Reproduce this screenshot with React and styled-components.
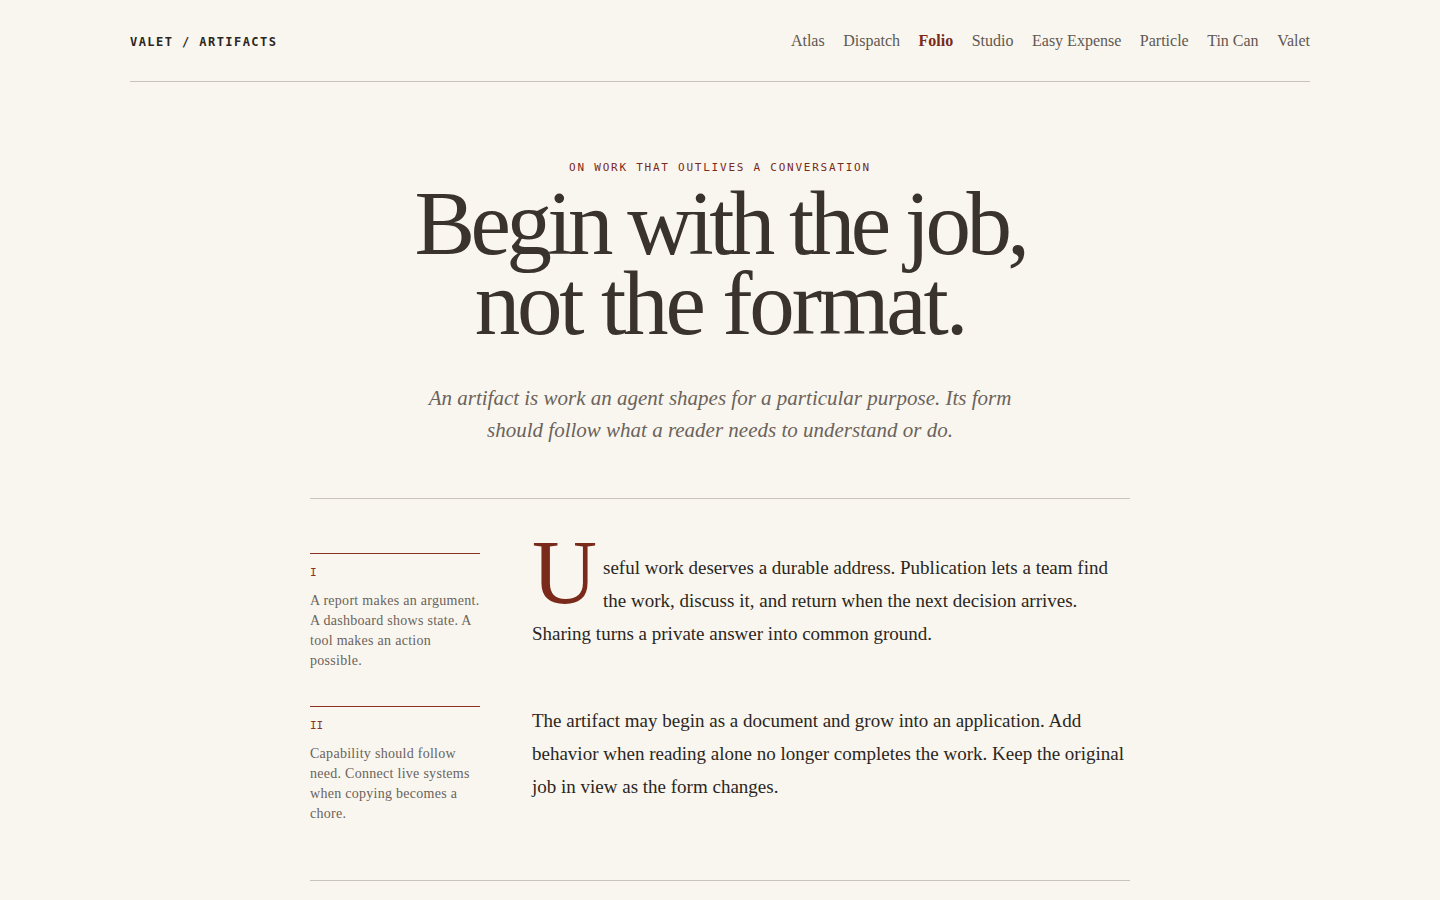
import React from "react";
import styled, { createGlobalStyle } from "styled-components";

const GlobalStyle = createGlobalStyle`
  html, body {
    margin: 0;
    padding: 0;
    background: #f9f6f0;
  }
  body {
    font-family: "Liberation Serif", "DejaVu Serif", serif;
    color: #2b2621;
    -webkit-font-smoothing: antialiased;
  }
`;

const Page = styled.div`
  min-height: 900px;
  background: #f9f6f0;
`;

const Header = styled.header`
  margin: 0 130px;
  height: 81px;
  display: flex;
  align-items: center;
  justify-content: space-between;
  border-bottom: 1px solid #c9c3b9;
`;

const Logo = styled.div`
  font-family: "DejaVu Sans Mono", "Liberation Mono", monospace;
  font-size: 12px;
  font-weight: 700;
  letter-spacing: 0.12em;
  color: #2b2621;
  padding-top: 2px;
`;

const Nav = styled.nav`
  display: flex;
  gap: 18.5px;
`;

const NavLink = styled.a`
  font-size: 16px;
  color: ${(p) => (p.$active ? "#7a2a1a" : "#5f5850")};
  font-weight: ${(p) => (p.$active ? 700 : 400)};
  text-decoration: none;
  cursor: pointer;
`;

const Hero = styled.section`
  display: flex;
  flex-direction: column;
  align-items: center;
  text-align: center;
  padding-top: 79px;
`;

const Eyebrow = styled.div`
  font-family: "DejaVu Sans Mono", "Liberation Mono", monospace;
  font-size: 11px;
  letter-spacing: 0.16em;
  color: #7a2a1a;
  text-transform: uppercase;
`;

const Title = styled.h1`
  margin: 10px 0 0;
  font-size: 91px;
  line-height: 80px;
  font-weight: 400;
  letter-spacing: -0.05em;
  color: #3a332d;
`;

const TitleLine = styled.span`
  display: block;
  letter-spacing: ${(p) => p.$tracking || "-0.05em"};
`;

const Lede = styled.p`
  margin: 38px 0 0;
  max-width: 600px;
  font-size: 21px;
  line-height: 32px;
  font-style: italic;
  color: #6b635a;
`;

const Article = styled.article`
  margin: 52px auto 0;
  width: 820px;
  border-top: 1px solid #c9c3b9;
  border-bottom: 1px solid #c9c3b9;
  padding: 54px 0 56px;
  display: flex;
  flex-direction: column;
  gap: 35px;
`;

const Row = styled.div`
  display: grid;
  grid-template-columns: 170px 1fr;
  column-gap: 52px;
`;

const Note = styled.aside`
  border-top: 1px solid #8a3322;
  padding-top: 12px;
`;

const Numeral = styled.div`
  font-family: "DejaVu Sans Mono", "Liberation Mono", monospace;
  font-size: 11px;
  color: #8a3322;
  margin-bottom: 12px;
`;

const NoteText = styled.p`
  margin: 0;
  font-size: 14px;
  line-height: 20px;
  letter-spacing: 0.02em;
  color: #6b635a;
`;

const Body = styled.p`
  margin: -2px 0 0;
  font-size: 19px;
  line-height: 33px;
  color: #2b2621;
`;

const DropCap = styled.span`
  float: left;
  font-size: 90px;
  line-height: 62px;
  margin-top: -9px;
  margin-right: 6px;
  color: #7a2a1a;
`;

const navItems = ["Atlas", "Dispatch", "Folio", "Studio", "Easy Expense", "Particle", "Tin Can", "Valet"];

export default function App() {
  return (
    <Page>
      <GlobalStyle />
      <Header>
        <Logo>VALET / ARTIFACTS</Logo>
        <Nav>
          {navItems.map((n) => (
            <NavLink key={n} $active={n === "Folio"}>
              {n}
            </NavLink>
          ))}
        </Nav>
      </Header>
      <Hero>
        <Eyebrow>On work that outlives a conversation</Eyebrow>
        <Title>
          <TitleLine>Begin with the job,</TitleLine>
          <TitleLine $tracking="-0.035em">not the format.</TitleLine>
        </Title>
        <Lede>
          An artifact is work an agent shapes for a particular purpose. Its form should follow what a reader needs
          to understand or do.
        </Lede>
      </Hero>
      <Article>
        <Row>
          <Note>
            <Numeral>I</Numeral>
            <NoteText>A report makes an argument. A dashboard shows state. A tool makes an action possible.</NoteText>
          </Note>
          <Body>
            <DropCap>U</DropCap>
            seful work deserves a durable address. Publication lets a team find the work, discuss it, and return
            when the next decision arrives. Sharing turns a private answer into common ground.
          </Body>
        </Row>
        <Row>
          <Note>
            <Numeral>II</Numeral>
            <NoteText>Capability should follow need. Connect live systems when copying becomes a chore.</NoteText>
          </Note>
          <Body>
            The artifact may begin as a document and grow into an application. Add behavior when reading alone no
            longer completes the work. Keep the original job in view as the form changes.
          </Body>
        </Row>
      </Article>
    </Page>
  );
}
